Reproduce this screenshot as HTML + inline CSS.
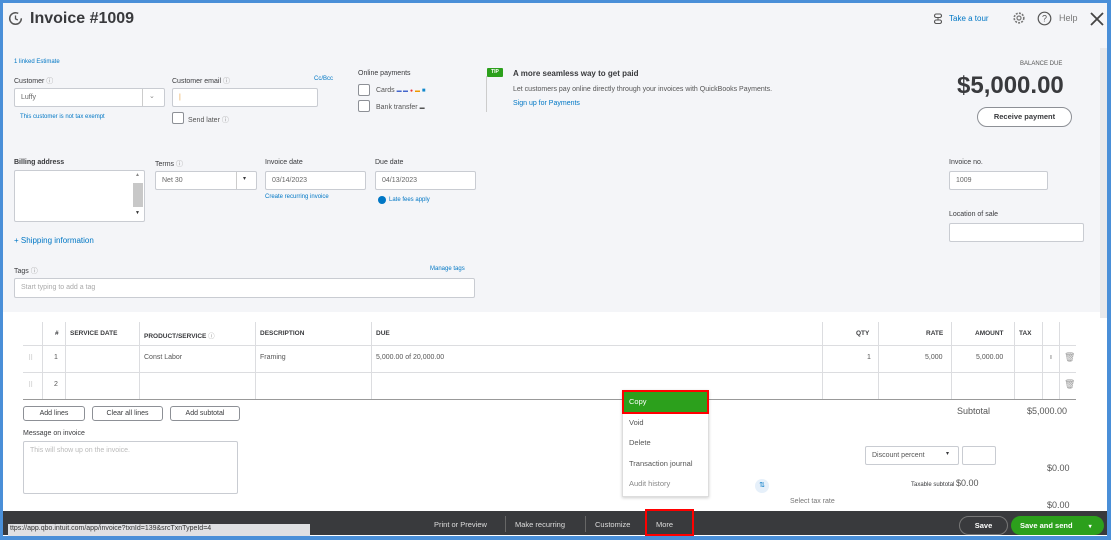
<!DOCTYPE html>
<html><head><meta charset="utf-8"><style>
*{box-sizing:border-box;margin:0;padding:0}
body{width:1111px;height:540px;overflow:hidden;background:#4a8fd8;font-family:"Liberation Sans",sans-serif;color:#393a3d;position:relative}
.a{position:absolute;white-space:nowrap}
.s{font-size:7px;color:#555}
.lbl{font-size:7px;color:#393a3d}
.in{position:absolute;background:#fff;border:1px solid #c9ccd2;border-radius:2px;font-size:7px;color:#666;padding:5px 6px}
.blue{color:#0077c5}
.cb{position:absolute;width:12px;height:12px;border:1px solid #8d9096;border-radius:2px;background:#fff}
.btn{position:absolute;border:1px solid #8d9096;border-radius:3px;background:#fff;font-size:7px;text-align:center;padding-top:3px;height:15px}
.th{font-size:6.5px;font-weight:bold;color:#393a3d}
.vl{position:absolute;width:1px;background:#dcdde0}
.hl{position:absolute;height:1px;background:#dcdde0}
</style></head><body>
<div class="a" style="left:3px;top:3px;width:1104px;height:533px;background:#fff;overflow:hidden">
 <div class="a" style="left:0;top:0;width:1104px;height:309px;background:#f4f5f8"></div>
</div>
<svg class="a" style="left:8px;top:11px" width="15" height="15" viewBox="0 0 15 15"><circle cx="7.5" cy="7.5" r="5.8" fill="none" stroke="#555" stroke-width="1.5" stroke-dasharray="30 6"/><path d="M7.5 4.5V7.8L9.8 9" fill="none" stroke="#555" stroke-width="1.3"/></svg>
<div class="a" style="left:30px;top:10px;font-size:16px;font-weight:bold;color:#393a3d">Invoice #1009</div>
<svg class="a" style="left:933px;top:13px" width="12" height="12" viewBox="0 0 12 12"><rect x="1.5" y="1" width="7" height="3.5" rx="1.7" fill="none" stroke="#555" stroke-width="1.1"/><rect x="1.5" y="7" width="7" height="3.5" rx="1.7" fill="none" stroke="#555" stroke-width="1.1"/><path d="M5 4.5V7" stroke="#555"/></svg>
<div class="a blue" style="left:949px;top:14px;font-size:8px">Take a tour</div>
<svg class="a" style="left:1012px;top:11px" width="14" height="14" viewBox="0 0 14 14"><circle cx="7" cy="7" r="4.8" fill="none" stroke="#777" stroke-width="1.6" stroke-dasharray="2 1.2"/><circle cx="7" cy="7" r="2" fill="none" stroke="#777" stroke-width="1.2"/></svg>
<svg class="a" style="left:1037px;top:11px" width="15" height="15" viewBox="0 0 15 15"><circle cx="7.5" cy="7.5" r="6.3" fill="none" stroke="#555" stroke-width="1.2"/><text x="7.5" y="10.5" font-size="9" text-anchor="middle" fill="#555" font-family="Liberation Sans">?</text></svg>
<div class="a" style="left:1059px;top:13px;font-size:9px;color:#777">Help</div>
<svg class="a" style="left:1089px;top:11px" width="16" height="16" viewBox="0 0 16 16"><path d="M2 2L14 14M14 2L2 14" stroke="#444" stroke-width="1.8"/></svg>
<div class="a" style="left:1100px;top:48px;width:7px;height:270px;background:#e8e9ec"></div>
<div class="a blue" style="left:14px;top:59px;font-size:6px">1 linked Estimate</div>
<div class="a lbl" style="left:14px;top:76px">Customer <span style="color:#999">ⓘ</span></div>
<div class="in" style="left:14px;top:88px;width:151px;height:19px">Luffy</div>
<div class="a" style="left:142px;top:89px;width:1px;height:17px;background:#ccc"></div>
<div class="a" style="left:149px;top:92px;font-size:7px;color:#888">⌄</div>
<div class="a blue" style="left:20px;top:114px;font-size:6px">This customer is not tax exempt</div>
<div class="a lbl" style="left:172px;top:76px">Customer email <span style="color:#999">ⓘ</span></div>
<div class="a blue" style="left:314px;top:76px;font-size:6px">Cc/Bcc</div>
<div class="in" style="left:172px;top:88px;width:146px;height:19px"><span style="color:#e8a040">|</span></div>
<div class="cb" style="left:172px;top:112px"></div>
<div class="a s" style="left:188px;top:115px">Send later <span style="color:#999">ⓘ</span></div>
<div class="a lbl" style="left:358px;top:70px">Online payments</div>
<div class="cb" style="left:358px;top:84px"></div>
<div class="a s" style="left:376px;top:87px">Cards <span style="font-size:5px;color:#46c">▬ ▬</span> <span style="color:#e33;font-size:5px">●</span> <span style="font-size:5px;color:#e90">▬</span> <span style="color:#18c;font-size:6px">■</span></div>
<div class="cb" style="left:358px;top:100px"></div>
<div class="a s" style="left:376px;top:104px">Bank transfer <span style="font-size:5px">▬</span></div>
<div class="a" style="left:486px;top:76px;width:1px;height:36px;background:#ccc"></div>
<div class="a" style="left:487px;top:68px;width:16px;height:9px;background:#2ca01c;border-radius:1px;color:#fff;font-size:5px;font-weight:bold;text-align:center;line-height:9px">TIP</div>
<div class="a" style="left:513px;top:69px;font-size:8px;font-weight:bold;color:#393a3d">A more seamless way to get paid</div>
<div class="a s" style="left:513px;top:86px">Let customers pay online directly through your invoices with QuickBooks Payments.</div>
<div class="a blue" style="left:513px;top:100px;font-size:7px">Sign up for Payments</div>
<div class="a" style="left:1020px;top:61px;font-size:6px;color:#555">BALANCE DUE</div>
<div class="a" style="left:957px;top:72px;font-size:24px;font-weight:bold;color:#393a3d">$5,000.00</div>
<div class="a" style="left:977px;top:107px;width:95px;height:20px;border:1px solid #8d9096;border-radius:10px;background:#fff;font-size:7.5px;font-weight:bold;text-align:center;line-height:18px">Receive payment</div>
<div class="a lbl" style="left:14px;top:159px;font-weight:bold">Billing address</div>
<div class="in" style="left:14px;top:170px;width:131px;height:52px"></div>
<div class="a" style="left:133px;top:183px;width:10px;height:24px;background:#c8c8c8"></div>
<div class="a" style="left:135px;top:172px;font-size:5px;color:#888">▲</div>
<div class="a" style="left:135px;top:210px;font-size:5px;color:#333">▼</div>
<div class="a lbl" style="left:155px;top:159px">Terms <span style="color:#999">ⓘ</span></div>
<div class="in" style="left:155px;top:171px;width:102px;height:19px">Net 30</div>
<div class="a" style="left:236px;top:172px;width:1px;height:17px;background:#ccc"></div>
<div class="a" style="left:243px;top:175px;font-size:6px">▾</div>
<div class="a lbl" style="left:265px;top:159px">Invoice date</div>
<div class="in" style="left:265px;top:171px;width:101px;height:19px">03/14/2023</div>
<div class="a blue" style="left:265px;top:194px;font-size:6px">Create recurring invoice</div>
<div class="a lbl" style="left:375px;top:159px">Due date</div>
<div class="in" style="left:375px;top:171px;width:101px;height:19px">04/13/2023</div>
<div class="a" style="left:378px;top:196px;width:8px;height:8px;border-radius:50%;background:#0077c5"></div>
<div class="a blue" style="left:389px;top:197px;font-size:6px">Late fees apply</div>
<div class="a lbl" style="left:949px;top:159px">Invoice no.</div>
<div class="in" style="left:949px;top:171px;width:99px;height:19px">1009</div>
<div class="a lbl" style="left:949px;top:211px">Location of sale</div>
<div class="in" style="left:949px;top:223px;width:135px;height:19px"></div>
<div class="a blue" style="left:14px;top:236px;font-size:8px">+ Shipping information</div>
<div class="a lbl" style="left:14px;top:266px">Tags <span style="color:#999">ⓘ</span></div>
<div class="a blue" style="left:430px;top:266px;font-size:6px">Manage tags</div>
<div class="in" style="left:14px;top:278px;width:461px;height:20px;color:#aaa">Start typing to add a tag</div>
<div class="hl" style="left:23px;top:345px;width:1053px"></div>
<div class="hl" style="left:23px;top:372px;width:1053px"></div>
<div class="hl" style="left:23px;top:399px;width:1053px;background:#999"></div>
<div class="vl" style="left:42px;top:322px;height:77px"></div>
<div class="vl" style="left:65px;top:322px;height:77px"></div>
<div class="vl" style="left:139px;top:322px;height:77px"></div>
<div class="vl" style="left:255px;top:322px;height:77px"></div>
<div class="vl" style="left:371px;top:322px;height:77px"></div>
<div class="vl" style="left:822px;top:322px;height:77px"></div>
<div class="vl" style="left:878px;top:322px;height:77px"></div>
<div class="vl" style="left:951px;top:322px;height:77px"></div>
<div class="vl" style="left:1014px;top:322px;height:77px"></div>
<div class="vl" style="left:1042px;top:322px;height:77px"></div>
<div class="vl" style="left:1059px;top:322px;height:77px"></div>
<div class="a th" style="left:55px;top:330px">#</div>
<div class="a th" style="left:70px;top:330px">SERVICE DATE</div>
<div class="a th" style="left:144px;top:330px">PRODUCT/SERVICE <span style="color:#999;font-weight:normal">ⓘ</span></div>
<div class="a th" style="left:260px;top:330px">DESCRIPTION</div>
<div class="a th" style="left:376px;top:330px">DUE</div>
<div class="a th" style="left:856px;top:330px">QTY</div>
<div class="a th" style="left:926px;top:330px">RATE</div>
<div class="a th" style="left:975px;top:330px">AMOUNT</div>
<div class="a th" style="left:1019px;top:330px">TAX</div>
<div class="a s" style="left:28px;top:354px;color:#bbb">⠿</div>
<div class="a s" style="left:54px;top:354px">1</div>
<div class="a s" style="left:144px;top:354px">Const Labor</div>
<div class="a s" style="left:260px;top:354px">Framing</div>
<div class="a s" style="left:376px;top:354px">5,000.00 of 20,000.00</div>
<div class="a s" style="left:867px;top:354px">1</div>
<div class="a s" style="left:925px;top:354px">5,000</div>
<div class="a s" style="left:976px;top:354px">5,000.00</div>
<div class="a s" style="left:1050px;top:354px">ı</div>
<div class="a" style="left:1064px;top:352px;font-size:9px;color:#999">🗑</div>
<div class="a s" style="left:28px;top:381px;color:#bbb">⠿</div>
<div class="a s" style="left:54px;top:381px">2</div>
<div class="a" style="left:1064px;top:379px;font-size:9px;color:#999">🗑</div>
<div class="btn" style="left:23px;top:406px;width:62px">Add lines</div>
<div class="btn" style="left:92px;top:406px;width:71px">Clear all lines</div>
<div class="btn" style="left:170px;top:406px;width:70px">Add subtotal</div>
<div class="a lbl" style="left:23px;top:430px">Message on invoice</div>
<div class="in" style="left:23px;top:441px;width:215px;height:53px;color:#bbb">This will show up on the invoice.</div>
<div class="a" style="left:957px;top:406px;font-size:9px;color:#555">Subtotal</div>
<div class="a" style="left:1027px;top:406px;font-size:9px;color:#555">$5,000.00</div>
<div class="in" style="left:865px;top:446px;width:94px;height:19px;color:#555">Discount percent</div>
<div class="a" style="left:946px;top:450px;font-size:6px">▾</div>
<div class="in" style="left:962px;top:446px;width:34px;height:19px"></div>
<div class="a" style="left:1047px;top:463px;font-size:9px;color:#555">$0.00</div>
<div class="a" style="left:911px;top:478px;font-size:6px">Taxable subtotal <span style="font-size:9px;color:#555">$0.00</span></div>
<div class="a s" style="left:790px;top:498px;color:#777">Select tax rate</div>
<div class="a" style="left:1047px;top:500px;font-size:9px;color:#555">$0.00</div>
<div class="a" style="left:755px;top:479px;width:14px;height:14px;border-radius:50%;background:#e6f0fa;color:#0077c5;font-size:7px;text-align:center;line-height:14px">⇅</div>
<div class="a" style="left:622px;top:390px;width:87px;height:107px;background:#fff;border:1px solid #ddd;box-shadow:0 1px 3px rgba(0,0,0,.2)"></div>
<div class="a" style="left:622px;top:390px;width:87px;height:24px;background:#2ca01c;border:2px solid #f00;color:#fff;font-size:7.5px;padding:5px 5px">Copy</div>
<div class="a s" style="left:629px;top:418px;font-size:7.5px">Void</div>
<div class="a s" style="left:629px;top:438px;font-size:7.5px">Delete</div>
<div class="a s" style="left:629px;top:459px;font-size:7.5px">Transaction journal</div>
<div class="a s" style="left:629px;top:479px;font-size:7.5px;color:#888">Audit history</div>
<div class="a" style="left:3px;top:511px;width:1104px;height:24px;background:#393a3d"></div>
<div class="a" style="left:434px;top:520px;font-size:7.5px;color:#ddd">Print or Preview</div>
<div class="a" style="left:505px;top:516px;width:1px;height:16px;background:#666"></div>
<div class="a" style="left:515px;top:520px;font-size:7.5px;color:#ddd">Make recurring</div>
<div class="a" style="left:585px;top:516px;width:1px;height:16px;background:#666"></div>
<div class="a" style="left:595px;top:520px;font-size:7.5px;color:#ddd">Customize</div>
<div class="a" style="left:645px;top:509px;width:49px;height:27px;border:2px solid #f00"></div>
<div class="a" style="left:656px;top:520px;font-size:7.5px;color:#ddd">More</div>
<div class="a" style="left:959px;top:516px;width:49px;height:19px;border:1px solid #777;border-radius:10px;color:#fff;font-size:7.5px;font-weight:bold;text-align:center;line-height:17px">Save</div>
<div class="a" style="left:1011px;top:516px;width:93px;height:19px;background:#2ca01c;border-radius:10px;color:#fff;font-size:7.5px;font-weight:bold;line-height:19px;padding-left:9px">Save and send <span style="margin-left:14px;font-size:6px">▾</span></div>
<div class="a" style="left:8px;top:524px;width:302px;height:12px;background:#dfe0e3;font-size:7px;color:#333;padding:1px 2px;overflow:hidden">ttps://app.qbo.intuit.com/app/invoice?txnId=139&amp;srcTxnTypeId=4</div>
</body></html>
